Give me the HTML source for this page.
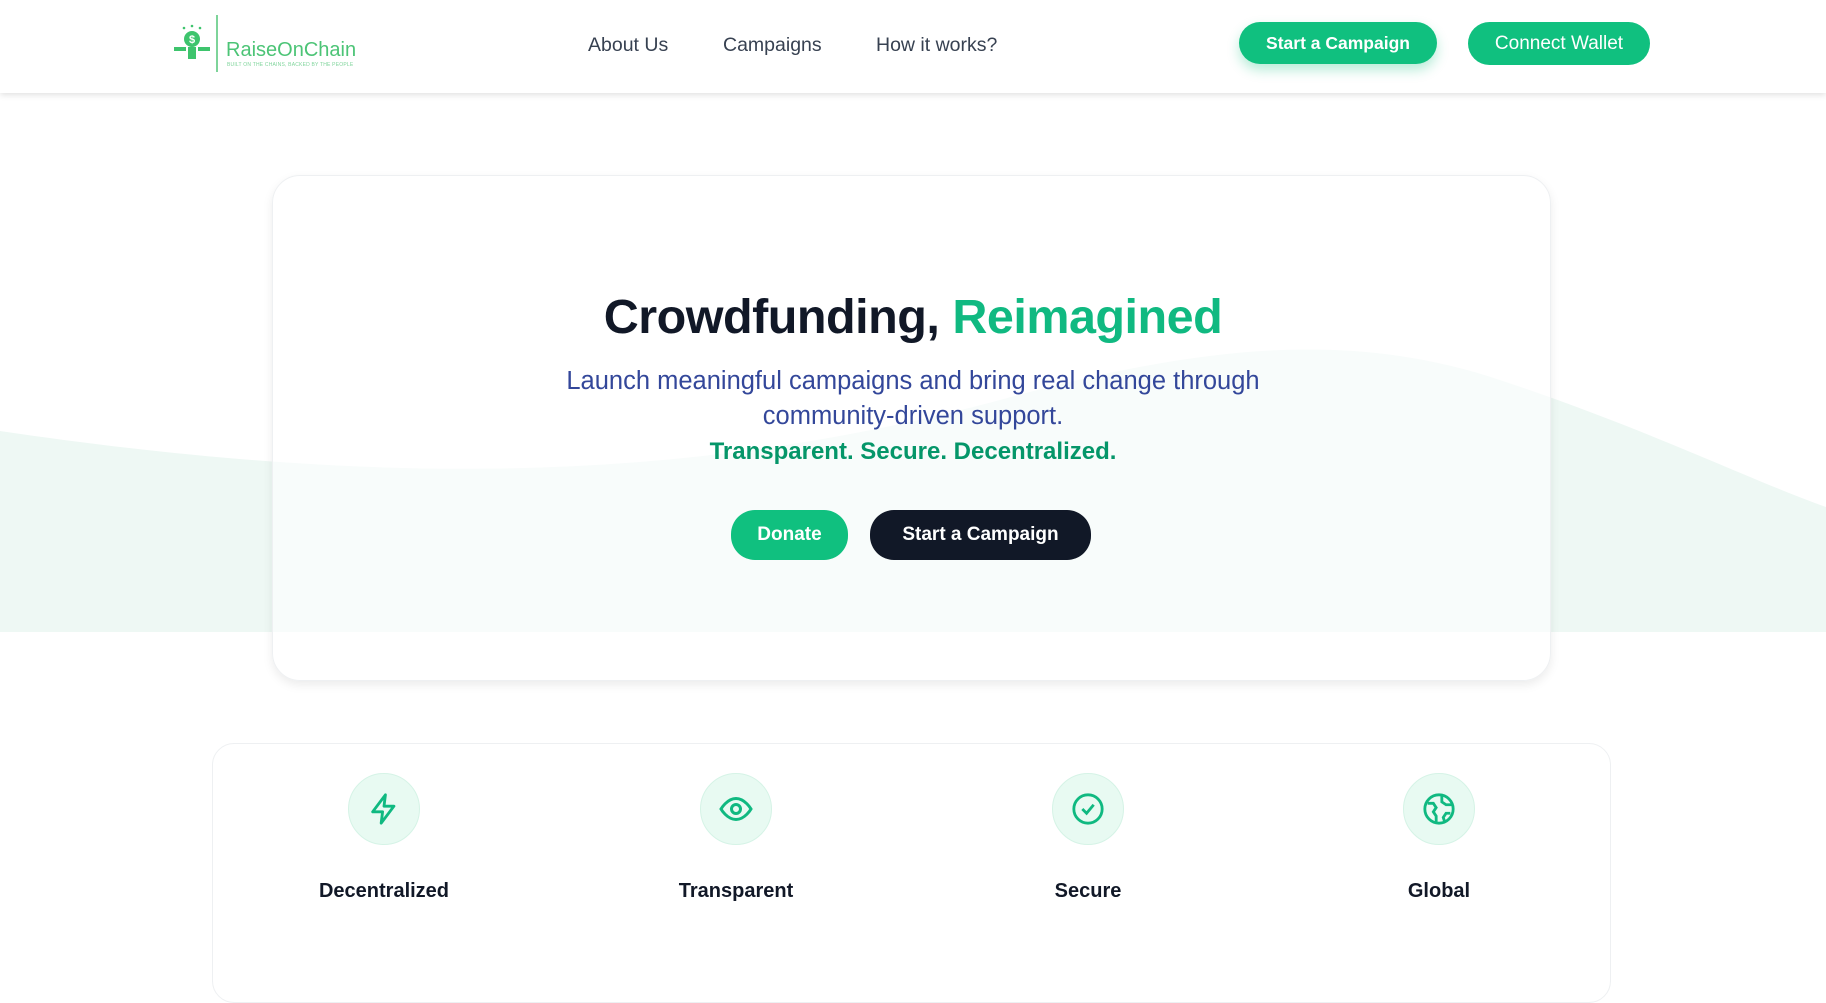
<!DOCTYPE html>
<html><head><meta charset="utf-8"><style>
*{margin:0;padding:0;box-sizing:border-box}
body{width:1826px;height:927px;overflow:hidden;background:#fff;font-family:"Liberation Sans",sans-serif;position:relative}
.hdr{position:absolute;left:0;top:0;width:1826px;height:93px;background:#fff;box-shadow:0 2px 6px rgba(0,0,0,.12);z-index:5}
.nav{position:absolute;top:34px;font-size:19.5px;color:#374151}
.btn{position:absolute;border-radius:24px;background:#10c07f;color:#fff;font-weight:bold;font-size:18px;display:flex;align-items:center;justify-content:center}
.card{position:absolute;left:272px;top:175px;width:1279px;height:506px;border-radius:28px;border:1px solid #eef0f2;box-shadow:0 4px 10px rgba(0,0,0,.08);background:rgba(255,255,255,.6)}
.feat{position:absolute;left:212px;top:743px;width:1399px;height:260px;border-radius:22px;border:1px solid #eef0f2;background:#fff}
.ic{position:absolute;width:72px;height:72px;border-radius:50%;background:#e8faf2;border:1px solid #d5f3e6;top:773px;display:flex;align-items:center;justify-content:center}
.lb{position:absolute;top:880px;width:300px;text-align:center;font-weight:bold;font-size:20px;color:#111827}
</style></head><body>
<svg style="position:absolute;left:0;top:0" width="1826" height="927"><path d="M0 431 C400 490 700 480 1000 400 C1200 345 1350 330 1500 380 C1650 430 1750 480 1826 507 L1826 632 L0 632 Z" fill="#eef8f4"/></svg>
<div class="hdr">
<svg style="position:absolute;left:170px;top:22px" width="44" height="44" viewBox="0 0 44 44"><circle cx="22" cy="17" r="8" fill="#3ec46d"/><text x="22" y="21" font-size="11" fill="#fff" text-anchor="middle" font-family="Liberation Sans" font-weight="bold">$</text><rect x="18" y="25" width="8" height="12" fill="#3ec46d"/><path d="M4 25 h12 v4 h-12z M28 25 h12 v4 h-12z" fill="#3ec46d"/><circle cx="22" cy="4" r="1.3" fill="#3ec46d"/><circle cx="14" cy="6" r="1.3" fill="#3ec46d"/><circle cx="30" cy="6" r="1.3" fill="#3ec46d"/></svg>
<div style="position:absolute;left:216px;top:15px;width:2px;height:57px;background:#7ed49a"></div>
<div style="position:absolute;left:226px;top:39px;font-size:20px;color:#4cc476">RaiseOnChain</div>
<div style="position:absolute;left:227px;top:62px;font-size:5px;color:#7ed49a;letter-spacing:.2px">BUILT ON THE CHAINS, BACKED BY THE PEOPLE</div>
<div class="nav" style="left:588px">About Us</div>
<div class="nav" style="left:723px">Campaigns</div>
<div class="nav" style="left:876px">How it works?</div>
<div class="btn" style="left:1239px;top:22px;width:198px;height:42px;font-size:17.5px;box-shadow:0 6px 12px rgba(16,192,127,.3)">Start a Campaign</div>
<div class="btn" style="left:1468px;top:22px;width:182px;height:43px;font-weight:normal;font-size:19px">Connect Wallet</div>
</div>
<div class="card"></div>
<div style="position:absolute;left:0;width:1826px;top:289px;text-align:center;font-size:48.5px;font-weight:bold;color:#111827;letter-spacing:-.5px">Crowdfunding, <span style="color:#10b981">Reimagined</span></div>
<div style="position:absolute;left:0;width:1826px;top:364px;text-align:center;font-size:25.5px;line-height:35px;color:#33479a">Launch meaningful campaigns and bring real change through<br>community-driven support.<br><b style="color:#059669;font-size:24px">Transparent. Secure. Decentralized.</b></div>
<div class="btn" style="left:731px;top:510px;width:117px;height:50px;font-size:19px">Donate</div>
<div class="btn" style="left:870px;top:510px;width:221px;height:50px;font-size:19px;background:#111827">Start a Campaign</div>
<div class="feat"></div>
<div class="ic" style="left:348px"><svg width="34" height="34" viewBox="0 0 24 24" fill="none" stroke="#10b981" stroke-width="2" stroke-linejoin="round"><path d="M13 2 4 14h7l-1 8 9-12h-7z"/></svg></div>
<div class="ic" style="left:700px"><svg width="36" height="36" viewBox="0 0 24 24" fill="none" stroke="#10b981" stroke-width="2"><path d="M2 12s4-7 10-7 10 7 10 7-4 7-10 7S2 12 2 12z"/><circle cx="12" cy="12" r="3"/></svg></div>
<div class="ic" style="left:1052px"><svg width="34" height="34" viewBox="0 0 24 24" fill="none" stroke="#10b981" stroke-width="2"><circle cx="12" cy="12" r="10"/><path d="M8 12l3 3 5-6"/></svg></div>
<div class="ic" style="left:1403px"><svg width="34" height="34" viewBox="0 0 24 24" fill="none" stroke="#10b981" stroke-width="2"><circle cx="12" cy="12" r="10"/><path d="M4 8h4l2 3-2 3 2 3v4M14 3v4l3 2h4M20 15h-3l-2 3 1 3"/></svg></div>
<div class="lb" style="left:234px">Decentralized</div>
<div class="lb" style="left:586px">Transparent</div>
<div class="lb" style="left:938px">Secure</div>
<div class="lb" style="left:1289px">Global</div>
</body></html>
